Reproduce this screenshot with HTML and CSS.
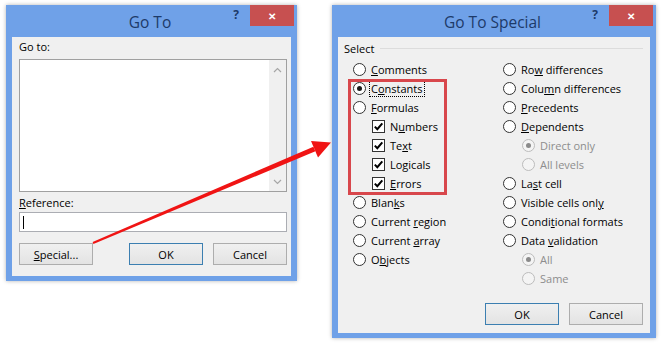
FILE: index.html
```html
<!DOCTYPE html>
<html lang="en">
  <head>
    <meta charset="UTF-8" />
    <title>Go To / Go To Special</title>
    <link rel="stylesheet" href="styles.css">
  </head>
  <body>
    <div class="page">
      <!-- Go To dialog -->
      <div class="dialog goto">
        <div class="titlebar">
          <div class="title">Go To</div>
          <div class="controls">
            <span class="help">?</span>
            <span class="close">✕</span>
          </div>
        </div>
        <div class="body goto-body">
          <div class="label">Go to:</div>
          <div class="listbox">
            <div class="scroll">
              <svg width="9" height="6" viewBox="0 0 9 6"><path d="M1 5 L4.5 1.5 L8 5" fill="none" stroke="#a6a6a6" stroke-width="1.2"/></svg>
              <svg width="9" height="6" viewBox="0 0 9 6"><path d="M1 1 L4.5 4.5 L8 1" fill="none" stroke="#a6a6a6" stroke-width="1.2"/></svg>
            </div>
          </div>
          <div class="label ref-label"><u>R</u>eference:</div>
          <div class="input"><span class="caret"></span></div>
          <div class="buttons">
            <div class="btn"><span><u>S</u>pecial...</span></div>
            <div class="btn default push">OK</div>
            <div class="btn">Cancel</div>
          </div>
        </div>
      </div>

      <!-- Go To Special dialog -->
      <div class="dialog special">
        <div class="titlebar">
          <div class="title">Go To Special</div>
          <div class="controls">
            <span class="help">?</span>
            <span class="close">✕</span>
          </div>
        </div>
        <div class="body special-body">
          <div class="group-head">
            <span>Select</span>
            <span class="rule"></span>
          </div>
          <div class="columns">
            <div class="col">
              <div class="opt"><span class="radio"></span><span><u>C</u>omments</span></div>
              <div class="opt"><span class="radio on"></span><span class="focus">C<u>o</u>nstants</span></div>
              <div class="opt"><span class="radio"></span><span><u>F</u>ormulas</span></div>
              <div class="opt sub"><span class="check"><svg width="11" height="11" viewBox="0 0 11 11"><path d="M1.8 5.6 L4.3 8.2 L9.3 2.3" fill="none" stroke="#000" stroke-width="2"/></svg></span><span>N<u>u</u>mbers</span></div>
              <div class="opt sub"><span class="check"><svg width="11" height="11" viewBox="0 0 11 11"><path d="M1.8 5.6 L4.3 8.2 L9.3 2.3" fill="none" stroke="#000" stroke-width="2"/></svg></span><span>Te<u>x</u>t</span></div>
              <div class="opt sub"><span class="check"><svg width="11" height="11" viewBox="0 0 11 11"><path d="M1.8 5.6 L4.3 8.2 L9.3 2.3" fill="none" stroke="#000" stroke-width="2"/></svg></span><span>Logicals</span></div>
              <div class="opt sub"><span class="check"><svg width="11" height="11" viewBox="0 0 11 11"><path d="M1.8 5.6 L4.3 8.2 L9.3 2.3" fill="none" stroke="#000" stroke-width="2"/></svg></span><span><u>E</u>rrors</span></div>
              <div class="opt"><span class="radio"></span><span>Blan<u>k</u>s</span></div>
              <div class="opt"><span class="radio"></span><span>Current <u>r</u>egion</span></div>
              <div class="opt"><span class="radio"></span><span>Current <u>a</u>rray</span></div>
              <div class="opt"><span class="radio"></span><span>O<u>b</u>jects</span></div>
            </div>
            <div class="col">
              <div class="opt"><span class="radio"></span><span>Ro<u>w</u> differences</span></div>
              <div class="opt"><span class="radio"></span><span>Colu<u>m</u>n differences</span></div>
              <div class="opt"><span class="radio"></span><span><u>P</u>recedents</span></div>
              <div class="opt"><span class="radio"></span><span><u>D</u>ependents</span></div>
              <div class="opt sub dis"><span class="radio on"></span><span>Direct only</span></div>
              <div class="opt sub dis"><span class="radio"></span><span>All levels</span></div>
              <div class="opt"><span class="radio"></span><span>La<u>s</u>t cell</span></div>
              <div class="opt"><span class="radio"></span><span>Visible cells onl<u>y</u></span></div>
              <div class="opt"><span class="radio"></span><span>Condi<u>t</u>ional formats</span></div>
              <div class="opt"><span class="radio"></span><span>Data <u>v</u>alidation</span></div>
              <div class="opt sub dis"><span class="radio on"></span><span>All</span></div>
              <div class="opt sub dis"><span class="radio"></span><span>Same</span></div>
            </div>
          </div>
          <div class="buttons right">
            <div class="btn default">OK</div>
            <div class="btn">Cancel</div>
          </div>
        </div>
        <div class="highlight"></div>
      </div>

      <!-- annotation arrow -->
      <svg class="arrow" width="663" height="348" viewBox="0 0 663 348">
        <polygon points="92.6,242.1 313.4,146.7 315.4,151.3 93.4,243.9" fill="#f01414"/>
        <polygon points="331,142.5 311,141 318,157.5" fill="#f01414"/>
      </svg>
    </div>
  </body>
</html>
```

FILE: styles.css
```css
body {
  margin: 0;
  background: #fff;
  font-family: "Open Sans", sans-serif;
  font-size: 11px;
  color: #000;
}
.page {
  position: relative;
  display: flex;
  align-items: flex-start;
  gap: 35px;
  padding: 5px 0 0 6px;
  height: 343px;
}
.dialog {
  position: relative;
  background: #6fa1e8;
  padding: 0 6px 5px;
  box-shadow: 0 0 4px rgba(0, 0, 0, 0.3);
}
.goto {
  width: 279px;
}
.special {
  width: 312px;
}
.titlebar {
  display: grid;
  grid-template-columns: 1fr auto 1fr;
  height: 32px;
  margin: 0 -6px;
  padding-right: 3px;
}
.title {
  grid-column: 2;
  font-size: 15.5px;
  line-height: 32px;
  padding-top: 1px;
  color: #1d3a68;
}
.controls {
  grid-column: 3;
  justify-self: end;
  display: flex;
  align-items: flex-start;
  gap: 11px;
}
.help {
  font-weight: bold;
  font-size: 12px;
  line-height: 20px;
  color: #1d3a68;
}
.close {
  width: 44px;
  height: 21px;
  background: #c75050;
  color: #fff;
  font-size: 10px;
  font-weight: bold;
  display: flex;
  align-items: center;
  justify-content: center;
}
.body {
  background: #f0f0f0;
}
.goto-body {
  padding: 3px 4px 11px 7px;
}
.label {
  height: 14px;
  line-height: 14px;
}
.ref-label {
  margin-top: 4px;
}
.listbox {
  box-sizing: border-box;
  height: 133px;
  margin-top: 5px;
  border: 1px solid #a0a0a0;
  background: #fff;
  display: flex;
  justify-content: flex-end;
}
.scroll {
  width: 17px;
  background: #f0f0f0;
  display: flex;
  flex-direction: column;
  justify-content: space-between;
  align-items: center;
  padding: 7px 0 6px;
}
.input {
  box-sizing: border-box;
  height: 20px;
  margin-top: 2px;
  border: 1px solid #abadb3;
  background: #fff;
  display: flex;
  align-items: center;
  padding-left: 3px;
}
.caret {
  width: 1px;
  height: 13px;
  background: #000;
}
.buttons {
  display: flex;
  gap: 10px;
  margin-top: 11px;
}
.buttons .push {
  margin-left: auto;
}
.buttons.right {
  justify-content: flex-end;
  margin-top: 15px;
  padding: 0 7px 8px 0;
}
.btn {
  box-sizing: border-box;
  width: 74px;
  height: 22px;
  border: 1px solid #adadad;
  background: linear-gradient(#f0f0f0, #e3e3e3);
  display: flex;
  align-items: center;
  justify-content: center;
}
.btn.default {
  border-color: #3c7fb1;
}
.special-body {
  padding-top: 4px;
}
.group-head {
  display: flex;
  align-items: center;
  gap: 6px;
  height: 14px;
  padding: 0 7px 0 6px;
}
.rule {
  flex: 1;
  border-top: 1px solid #dcdcdc;
}
.columns {
  display: grid;
  grid-template-columns: 150px 1fr;
  margin-top: 5px;
  padding-left: 15px;
}
.opt {
  display: flex;
  align-items: center;
  gap: 5px;
  height: 19px;
}
.opt.sub {
  padding-left: 19px;
}
.radio {
  box-sizing: border-box;
  width: 13px;
  height: 13px;
  border: 1px solid #333;
  border-radius: 50%;
  background: #fff;
  display: flex;
  align-items: center;
  justify-content: center;
}
.radio.on::after {
  content: "";
  width: 5px;
  height: 5px;
  border-radius: 50%;
  background: #1a1a1a;
}
.check {
  box-sizing: border-box;
  width: 13px;
  height: 13px;
  border: 1px solid #333;
  background: #fff;
  display: flex;
  align-items: center;
  justify-content: center;
}
.opt.dis {
  color: #8d8d8d;
}
.opt.dis .radio {
  border-color: #bcbcbc;
  background: #f4f4f4;
}
.opt.dis .radio.on::after {
  background: #8a8a8a;
}
.focus {
  outline: 1px dotted #000;
  padding: 0 1px;
  margin-left: -1px;
}
.highlight {
  position: absolute;
  left: 16px;
  top: 74px;
  box-sizing: border-box;
  width: 99px;
  height: 116px;
  border: 3px solid #d8474c;
}
.arrow {
  position: absolute;
  left: 0;
  top: 0;
  pointer-events: none;
}
```
